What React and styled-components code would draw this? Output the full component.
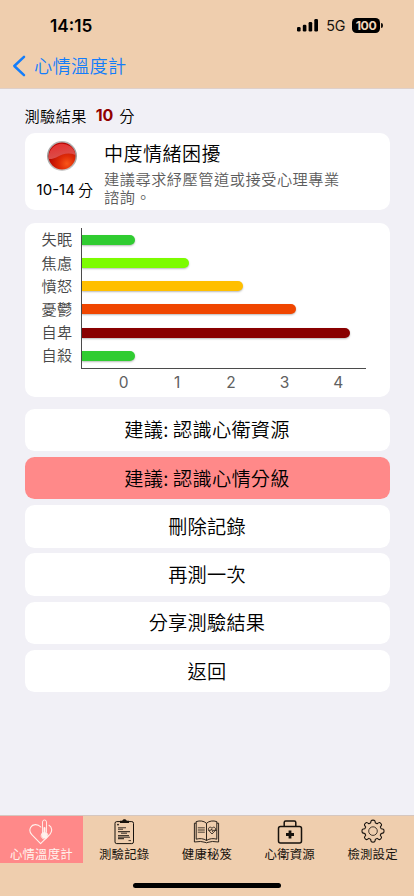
import React from "react";
import styled, { createGlobalStyle } from "styled-components";

const GlobalStyle = createGlobalStyle`
  * { box-sizing: border-box; }
  body { margin: 0; background: #f1f0f6; }
  button { font: inherit; color: inherit; border: 0; background: none; padding: 0; }
`;

const Screen = styled.div`
  width: 414px;
  height: 896px;
  display: flex;
  flex-direction: column;
  overflow: hidden;
  background: #f1f0f6;
  color: #000;
  font-family: "Noto Sans CJK TC", sans-serif;
  font-weight: 350;
  white-space: nowrap;
`;

const Header = styled.header`
  height: 89px;
  flex: none;
  background: #efceae;
  border-bottom: 1px solid #ded0cb;
`;

const StatusBar = styled.div`
  height: 44px;
  padding: 6px 31px 0 50px;
  display: flex;
  align-items: center;
  justify-content: space-between;
  font-family: Inter, sans-serif;
`;

const Clock = styled.span`
  font-size: 17.2px;
  font-weight: 600;
  letter-spacing: 0;
`;

const Signals = styled.div`
  display: flex;
  align-items: center;
`;

const Network = styled.span`
  margin: 1px 7px 0 8px;
  font-size: 14.3px;
  font-weight: 400;
  letter-spacing: -0.3px;
  color: #17120d;
`;

const Battery = styled.span`
  width: 28px;
  height: 15px;
  border-radius: 4.5px;
  background: #000;
  color: #f4d6b9;
  font-size: 12.3px;
  font-weight: 700;
  line-height: 15px;
  letter-spacing: -0.4px;
  text-align: center;
`;

const BatteryTip = styled.span`
  width: 2px;
  height: 5px;
  margin-left: 1px;
  border-radius: 0 2px 2px 0;
  background: #17120d;
`;

const BackLink = styled.button`
  height: 44px;
  padding-left: 12px;
  display: flex;
  align-items: center;
  gap: 8px;
  color: #137dfb;
  font-size: 18.2px;
  line-height: 26px;
  letter-spacing: 0.3px;
`;

const BackLabel = styled.span`
  padding-bottom: 2px;
`;

const Content = styled.main`
  flex: 1;
  padding: 12px 24.5px 0;
`;

const ResultLine = styled.div`
  height: 32px;
  padding-bottom: 4px;
  display: flex;
  align-items: center;
  font-size: 15.2px;
  line-height: 24px;
  letter-spacing: 0.4px;
`;

const Score = styled.strong`
  margin: 0 6px 0 9px;
  color: #910000;
  font-family: Inter, sans-serif;
  font-size: 16px;
  font-weight: 700;
  letter-spacing: -0.2px;
`;

const Card = styled.section`
  background: #fff;
  border-radius: 10px;
`;

const SummaryCard = styled(Card)`
  height: 77px;
  margin-bottom: 13px;
  display: flex;
`;

const Level = styled.div`
  width: 79.5px;
  padding: 7px 5px 0 0;
  display: flex;
  flex-direction: column;
  align-items: center;
`;

const LevelRange = styled.div`
  margin-top: 6px;
  padding-left: 6px;
  display: flex;
  gap: 3px;
  font-size: 15px;
  line-height: 24px;
`;

const RangeNumber = styled.span`
  font-family: Inter, sans-serif;
  font-weight: 400;
  letter-spacing: 0;
`;

const LevelTitle = styled.h1`
  margin: 6px 0 0;
  font-size: 19px;
  font-weight: inherit;
  line-height: 27px;
  letter-spacing: 0.5px;
`;

const LevelAdvice = styled.p`
  width: 240px;
  margin: 2.5px 0 0;
  color: #5c5c5c;
  font-size: 15.2px;
  line-height: 18px;
  letter-spacing: 0.53px;
  white-space: normal;
`;

const ChartCard = styled(Card)`
  height: 174px;
  margin-bottom: 11.5px;
  padding: 5px 24px 0 0;
  color: #484848;
`;

const ChartBody = styled.div`
  height: 141px;
  display: grid;
  grid-template-columns: 56px 1fr;
`;

const RowLabels = styled.div`
  padding-left: 17px;
  display: grid;
  grid-template-rows: 23.6px repeat(5, 23.2px);
  font-size: 15.2px;
  line-height: 20px;
  letter-spacing: 0.4px;
`;

const Plot = styled.div`
  display: grid;
  grid-template-rows: 23.2px repeat(5, 23.3px);
  align-items: center;
  border-left: 1.5px solid #4b4b4b;
  border-bottom: 1.5px solid #4b4b4b;
`;

const Bar = styled.div`
  width: ${({ $score }) => $score * 53.7 + 53.7}px;
  height: 10px;
  border-radius: 0 5px 5px 0;
  background: ${({ $color }) => $color};
  box-shadow: 0 1px 2px rgba(0, 0, 0, 0.28);
`;

const Ticks = styled.div`
  padding: 3px 0 0 72.2px;
  display: grid;
  grid-template-columns: repeat(5, 53.7px);
  text-align: center;
  font-family: Inter, sans-serif;
  font-weight: 400;
  font-size: 15.5px;
  line-height: 22px;
  color: #606060;
`;

const Actions = styled.div`
  display: grid;
  gap: 5.8px;
`;

const ActionButton = styled.button`
  height: 42.5px;
  border-radius: 9.5px;
  background: ${({ $selected }) => ($selected ? "#ff8989" : "#fff")};
  font-size: 19.2px;
  line-height: 41px;
  letter-spacing: 0.25px;
  text-align: center;
`;

const Footer = styled.footer`
  height: 81px;
  flex: none;
  display: flex;
  flex-direction: column;
  align-items: center;
  background: #efceae;
  border-top: 1px solid #d5c7c0;
`;

const Tabs = styled.nav`
  width: 100%;
  height: 47px;
  display: grid;
  grid-template-columns: repeat(5, 1fr);
`;

const Tab = styled.button`
  display: flex;
  flex-direction: column;
  align-items: center;
  padding-top: 3px;
  background: ${({ $active }) => ($active ? "#ff8989" : "transparent")};
  color: ${({ $active }) => ($active ? "#fff2ed" : "#17120d")};
  font-size: 12.4px;
  font-weight: 400;
  line-height: 17px;
  letter-spacing: 0.2px;
  & > svg { display: block; flex: none; margin-bottom: 1px; }
`;

const HomeIndicator = styled.div`
  width: 148px;
  height: 5px;
  margin-top: 20px;
  border-radius: 3px;
  background: #000;
`;

const SignalIcon = () => (
  <svg width="21" height="14" viewBox="0 0 21 14">
    <rect x="0" y="9" width="3.6" height="4.5" rx="1.2" />
    <rect x="5.8" y="6.8" width="3.6" height="6.7" rx="1.2" />
    <rect x="11.6" y="4" width="3.6" height="9.5" rx="1.2" />
    <rect x="17.3" y="1" width="3.7" height="12.5" rx="1.2" />
  </svg>
);

const ChevronIcon = () => (
  <svg width="14" height="22" viewBox="0 0 14 22" fill="none" stroke="currentColor" strokeWidth="2.5" strokeLinecap="round" strokeLinejoin="round">
    <path d="M12 1.8 2.3 11 12 20.2" />
  </svg>
);

const RedBall = () => (
  <svg width="32" height="32" viewBox="0 0 32 32">
    <defs>
      <radialGradient id="ballGlow" cx="0.68" cy="0.78" r="0.7">
        <stop offset="0" stopColor="#f95618" />
        <stop offset="0.4" stopColor="#df2c08" />
        <stop offset="1" stopColor="#b50502" />
      </radialGradient>
      <linearGradient id="ballShine" x1="0" y1="0" x2="0.4" y2="1">
        <stop offset="0" stopColor="#e62c2b" />
        <stop offset="1" stopColor="#d9524e" />
      </linearGradient>
      <linearGradient id="ballRim" x1="0" y1="0" x2="0" y2="1">
        <stop offset="0" stopColor="#b8b8b8" />
        <stop offset="0.5" stopColor="#999" />
        <stop offset="1" stopColor="#ccc" />
      </linearGradient>
    </defs>
    <circle cx="16" cy="16" r="15" fill="url(#ballRim)" />
    <circle cx="16" cy="16" r="13.5" fill="url(#ballGlow)" />
    <path d="M2.8 19A13.5 13.5 0 0 1 29.5 15Q23 12.3 16.5 14.5C11 16.4 9 19.3 2.8 19Z" fill="url(#ballShine)" />
  </svg>
);

const HeartThermometerIcon = () => (
  <svg width="27" height="26" viewBox="0 0 27 26" fill="none" stroke="currentColor" strokeWidth="1.1" strokeLinecap="round" strokeLinejoin="round">
    <path d="M12.8 8C9.7 4.6 4.5 4.9 2.6 8.4 1.3 11 1.8 13.6 3.8 15.7L12.6 24.6l9.3-9.3c2.6-2.8 2.4-7-.9-9" />
    <path d="M14.5 13.8V3q0-2 2-2t2 2v10.8a3.4 3.4 0 1 1-4 0Z" strokeWidth="0.9" />
    <circle cx="16.5" cy="16.2" r="2.4" fill="currentColor" />
    <path d="M16.5 9v7" strokeWidth="2" />
  </svg>
);

const ClipboardIcon = () => (
  <svg width="22" height="26" viewBox="0 0 22 26" fill="none" stroke="currentColor">
    <rect x="2" y="2.6" width="18.5" height="22" rx="1.7" strokeWidth="1" />
    <path d="M7 1.7h2.2C9.6-.4 13.3-.4 13.8 1.7H16v2.4H7Z" fill="currentColor" stroke="none" />
    <circle cx="5" cy="5.6" r="0.9" fill="currentColor" stroke="none" />
    <path d="M5 8.8h8M5 10.2h5M5 12.6h12M8 14.2h6M5 16.6h11M5 18.2h12M5 19.6h6" strokeWidth="1.1" strokeOpacity="0.8" />
    <path d="M15.5 21.6h2.5" strokeWidth="0.8" />
  </svg>
);

const BookIcon = () => (
  <svg width="27" height="26" viewBox="0 0 27 26" fill="none" stroke="currentColor" strokeWidth="0.9" strokeLinejoin="round">
    <path d="M13.5 4.3C10.7 1.8 6.9 1.4 3.2 2.6v17.6c3.5-1 7.3-.8 10.3 1.3 3-2.1 6.8-2.3 10.3-1.3V2.6C20.1 1.4 16.3 1.8 13.5 4.3Z" />
    <path d="M13.5 4.3v17.2M3 4.2H1.4v18.8q7-1.2 10.6.3l1.5.5 1.5-.5q3.6-1.5 10.6-.3V4.2H24" />
    <path d="M4.8 8.6h7M4.8 10.2h7M4.8 11.8h7M4.8 13.4h7" strokeWidth="0.9" strokeOpacity="0.65" />
    <path d="m19 15-3-3.2c-2-2.7 1.4-5 3-2.6 1.6-2.4 5-.1 3 2.6ZM15.5 11.3h2.2l1-1.5.8 2.8.8-1.3h3.4" strokeWidth="0.8" />
  </svg>
);

const KitIcon = () => (
  <svg width="26" height="26" viewBox="0 0 26 26" fill="none" stroke="currentColor" strokeWidth="1.5" strokeLinejoin="round">
    <rect x="1.5" y="7.4" width="23" height="16.5" rx="2" />
    <path d="M7.2 7V3.5q0-1.5 1.5-1.5h8.6q1.5 0 1.5 1.5V7" />
    <path d="M13 11.5v8M9 15.5h8" strokeWidth="2.8" />
  </svg>
);

const GearIcon = () => (
  <svg width="24" height="26" viewBox="0 0 24 26" fill="none" stroke="currentColor" strokeWidth="1.1" strokeLinejoin="round">
    <path d="M9.6 4C10 1.3 10.3 1.1 12 1.1s2 .2 2.4 2.9q.9.3 1.7.8c2.2-1.7 2.5-1.6 3.6-.4 1.2 1.2 1.2 1.4-.4 3.6q.5.8.8 1.7c2.7.4 2.9.7 2.9 2.4s-.2 2-2.9 2.4q-.3.9-.8 1.7c1.6 2.2 1.6 2.4.4 3.6s-1.4 1.2-3.6-.4q-.8.5-1.7.8c-.4 2.7-.7 2.9-2.4 2.9s-2-.2-2.4-2.9q-.9-.3-1.7-.8c-2.2 1.6-2.4 1.6-3.6.4s-1.2-1.4.4-3.6q-.5-.8-.8-1.7C1.2 14.1 1 13.8 1 12.1s.2-2 2.9-2.4q.3-.9.8-1.7c-1.6-2.2-1.6-2.4-.4-3.6s1.4-1.3 3.6.4q.8-.5 1.7-.8Z" />
    <circle cx="12" cy="12.1" r="4.3" strokeWidth="0.8" />
  </svg>
);

const bars = [
  { label: "失眠", score: 0, color: "#30cc31" },
  { label: "焦慮", score: 1, color: "#7cfc00" },
  { label: "憤怒", score: 2, color: "#ffbf00" },
  { label: "憂鬱", score: 3, color: "#f04600" },
  { label: "自卑", score: 4, color: "#890000" },
  { label: "自殺", score: 0, color: "#30cc31" },
];

const actions = [
  { label: "建議: 認識心衛資源" },
  { label: "建議: 認識心情分級", selected: true },
  { label: "刪除記錄" },
  { label: "再測一次" },
  { label: "分享測驗結果" },
  { label: "返回" },
];

const tabs = [
  { label: "心情溫度計", Icon: HeartThermometerIcon, active: true },
  { label: "測驗記錄", Icon: ClipboardIcon },
  { label: "健康秘笈", Icon: BookIcon },
  { label: "心衛資源", Icon: KitIcon },
  { label: "檢測設定", Icon: GearIcon },
];

export default function App() {
  return (
    <Screen>
      <GlobalStyle />
      <Header>
        <StatusBar>
          <Clock>14:15</Clock>
          <Signals>
            <SignalIcon />
            <Network>5G</Network>
            <Battery>100</Battery>
            <BatteryTip />
          </Signals>
        </StatusBar>
        <BackLink>
          <ChevronIcon />
          <BackLabel>心情溫度計</BackLabel>
        </BackLink>
      </Header>
      <Content>
        <ResultLine>
          測驗結果<Score>10</Score>分
        </ResultLine>
        <SummaryCard>
          <Level>
            <RedBall />
            <LevelRange>
              <RangeNumber>10-14</RangeNumber>分
            </LevelRange>
          </Level>
          <div>
            <LevelTitle>中度情緒困擾</LevelTitle>
            <LevelAdvice>建議尋求紓壓管道或接受心理專業諮詢。</LevelAdvice>
          </div>
        </SummaryCard>
        <ChartCard>
          <ChartBody>
            <RowLabels>
              {bars.map(({ label }) => (
                <span key={label}>{label}</span>
              ))}
            </RowLabels>
            <Plot>
              {bars.map(({ label, score, color }) => (
                <Bar key={label} $score={score} $color={color} />
              ))}
            </Plot>
          </ChartBody>
          <Ticks>
            {[0, 1, 2, 3, 4].map((n) => (
              <span key={n}>{n}</span>
            ))}
          </Ticks>
        </ChartCard>
        <Actions>
          {actions.map(({ label, selected }) => (
            <ActionButton key={label} $selected={selected}>{label}</ActionButton>
          ))}
        </Actions>
      </Content>
      <Footer>
        <Tabs>
          {tabs.map(({ label, Icon, active }) => (
            <Tab key={label} $active={active}>
              <Icon />
              {label}
            </Tab>
          ))}
        </Tabs>
        <HomeIndicator />
      </Footer>
    </Screen>
  );
}
